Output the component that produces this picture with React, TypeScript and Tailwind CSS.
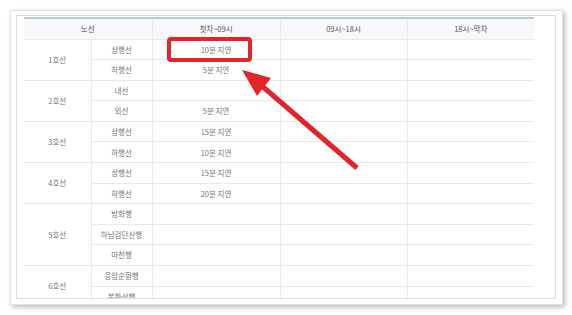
import React from "react";

// delay table rows: [line, direction, first~09, 09~18, 18~last]
const lines = [
  { name: "1호선", rows: [["상행선", "10분 지연"], ["하행선", "5분 지연"]] },
  { name: "2호선", rows: [["내선", ""], ["외선", "5분 지연"]] },
  { name: "3호선", rows: [["상행선", "15분 지연"], ["하행선", "10분 지연"]] },
  { name: "4호선", rows: [["상행선", "15분 지연"], ["하행선", "20분 지연"]] },
  { name: "5호선", rows: [["방화행", ""], ["하남검단산행", ""], ["마천행", ""]] },
  { name: "6호선", rows: [["응암순환행", ""], ["봉화산행", ""]] },
];

const cell = "border border-[#e9e9e9] text-center align-middle p-0 leading-none";

const App = () => {
  return (
    <div
      className="relative w-[572px] h-[315px] bg-white pl-[10px] pt-[10px] overflow-hidden"
      style={{ fontFamily: '"Noto Sans CJK KR", "Noto Sans", sans-serif' }}
    >
      {/* outer frame */}
      <div className="w-[553px] h-[295px] border border-[#e2e2e2] bg-white pl-[5px] pt-[4px] shadow-[2px_2px_5px_rgba(0,0,0,0.28)]">
        {/* inner frame */}
        <div className="w-[540px] h-[284px] border border-[#dedede] pl-[7px] pt-[1px] overflow-hidden">
          <table className="w-[510px] table-fixed border-collapse text-[7.5px] text-[#777]">
            <colgroup>
              <col className="w-[67px]" />
              <col className="w-[61px]" />
              <col className="w-[128px]" />
              <col className="w-[127px]" />
              <col className="w-[127px]" />
            </colgroup>
            <thead>
              <tr className="h-[21px] bg-[#f6f8f9] text-[#555]">
                <th colSpan={2} className={cell + " font-normal border-t-2 border-t-[#b3ccd4] border-l-0"}>
                  노선
                </th>
                <th className={cell + " font-normal border-t-2 border-t-[#b3ccd4]"}>첫차~09시</th>
                <th className={cell + " font-normal border-t-2 border-t-[#b3ccd4]"}>09시~18시</th>
                <th className={cell + " font-normal border-t-2 border-t-[#b3ccd4] border-r-0"}>18시~막차</th>
              </tr>
            </thead>
            <tbody>
              {lines.map((line) =>
                line.rows.map((r, j) => (
                  <tr key={line.name + j} className="h-[20.6px]">
                    {j === 0 && (
                      <td rowSpan={line.rows.length} className={cell + " border-l-0"}>
                        {line.name}
                      </td>
                    )}
                    <td className={cell}>{r[0]}</td>
                    <td className={cell}>{r[1]}</td>
                    <td className={cell}></td>
                    <td className={cell + " border-r-0"}></td>
                  </tr>
                ))
              )}
            </tbody>
          </table>
        </div>
      </div>

      {/* red annotation: box + arrow */}
      <svg className="absolute left-0 top-0 pointer-events-none" width="572" height="315" viewBox="0 0 572 315">
        <rect x="169" y="39" width="81" height="21" rx="2" fill="none" stroke="#e2242b" strokeWidth="4" />
        <line x1="262" y1="86" x2="357" y2="168" stroke="#e2242b" strokeWidth="5" />
        <polygon points="242,70 271,78 257,96" fill="#e2242b" />
      </svg>
    </div>
  );
};

export default App;
